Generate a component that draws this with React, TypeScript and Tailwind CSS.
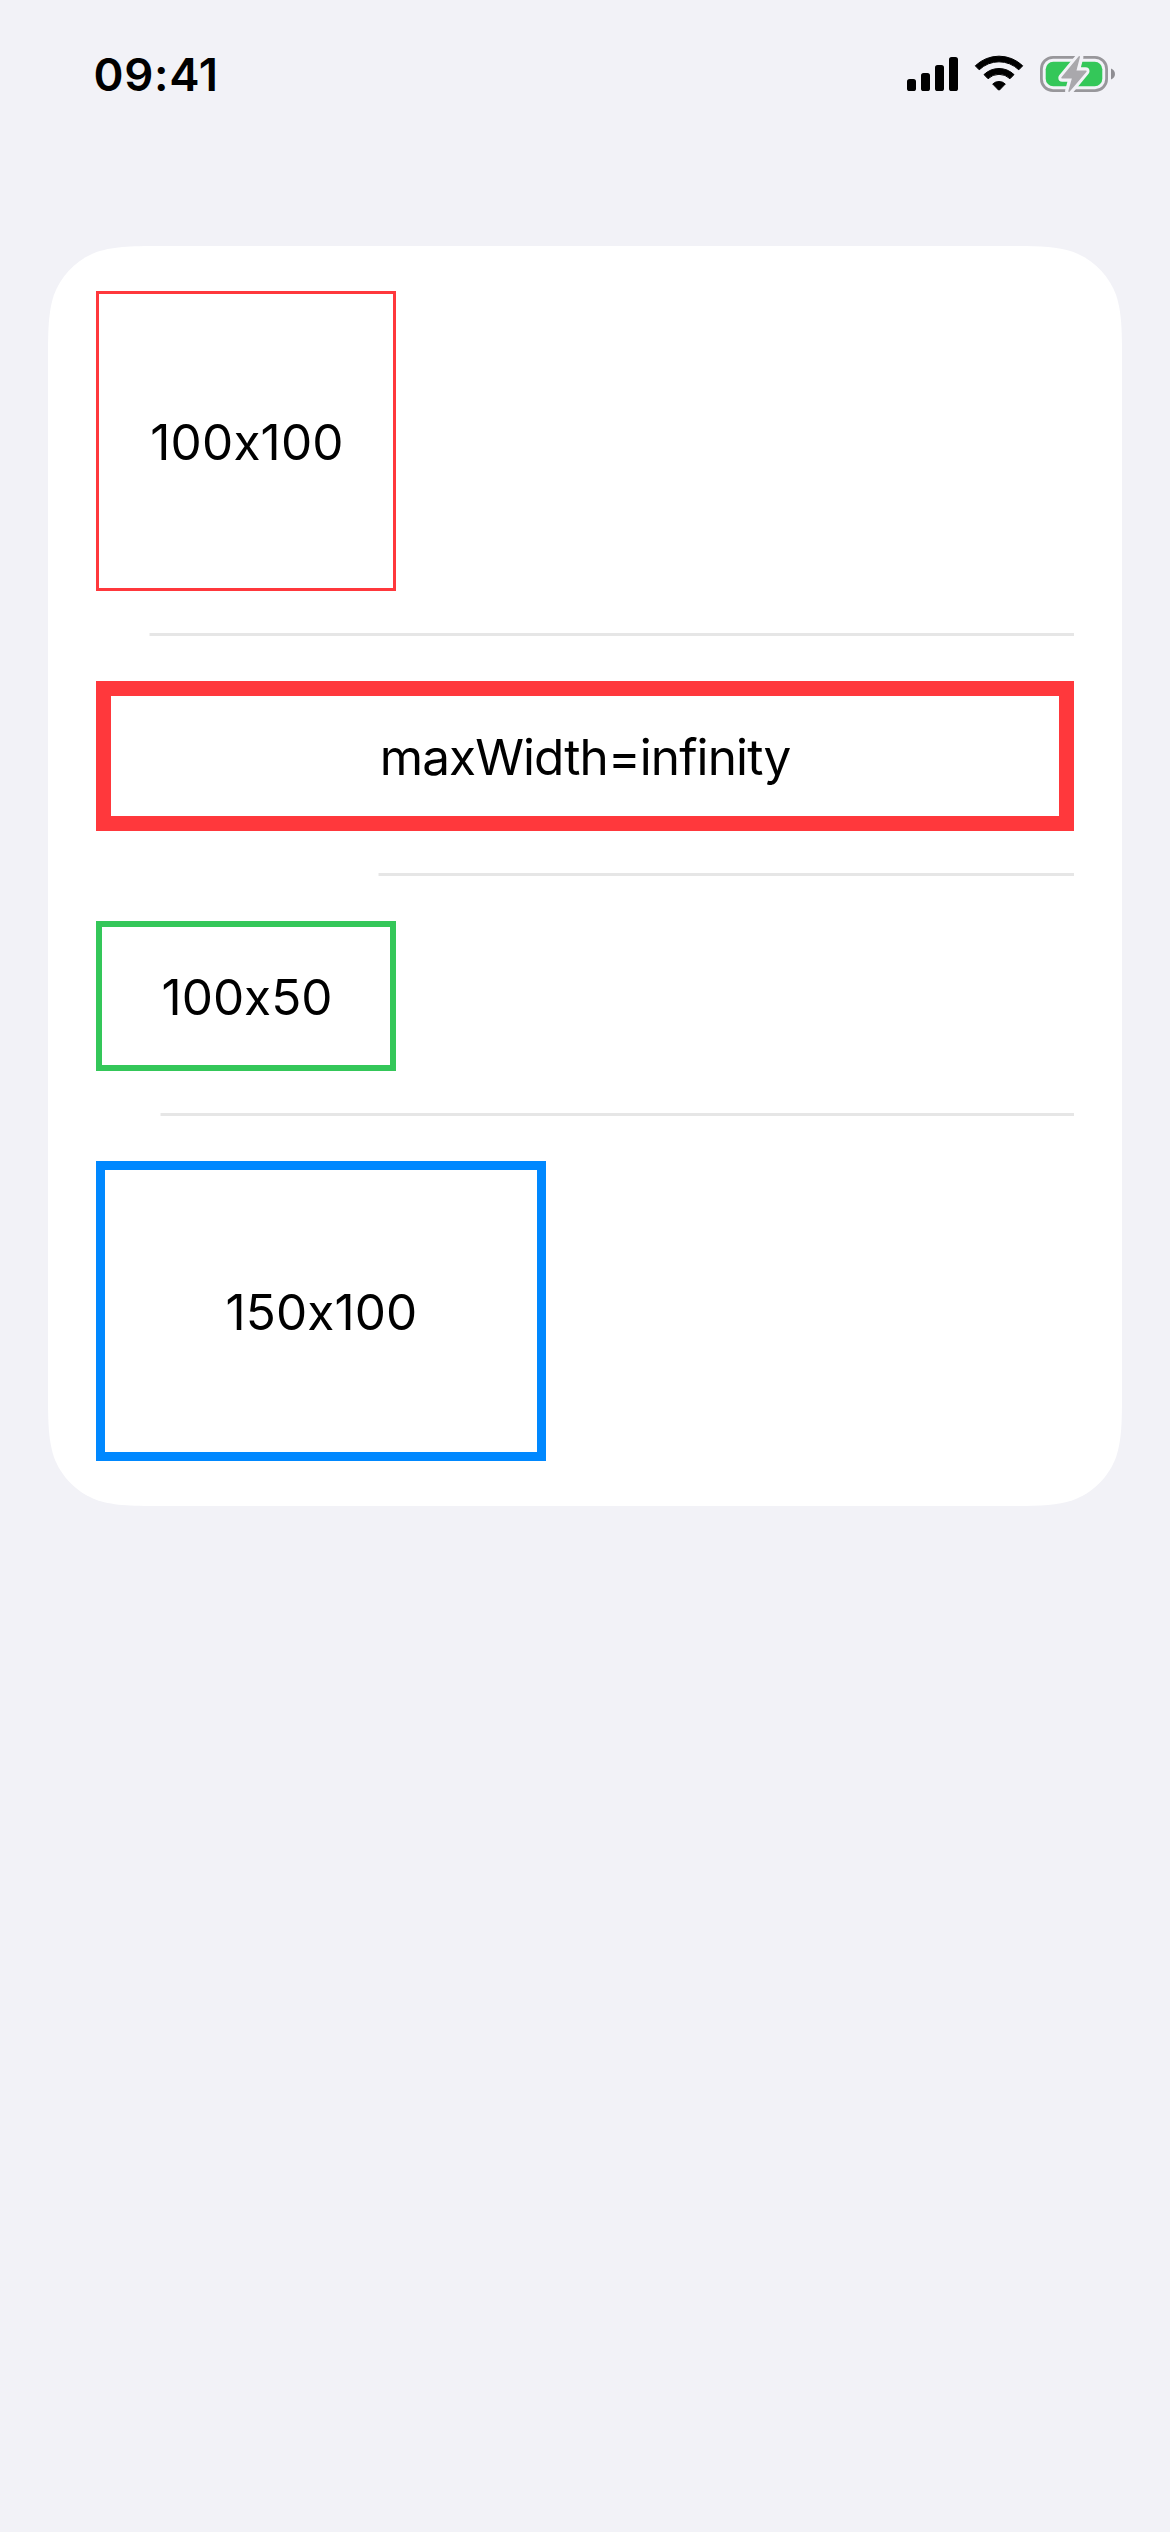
type Row = {
  label: string;
  box: string;
  text: string;
  divider?: string;
};

const rows: Row[] = [
  {
    label: "100x100",
    box: "h-[300px] w-[300px] border-3 border-[#ff383c]",
    text: "pl-[2px] tracking-[0.2px]",
    divider: "ml-[53px]",
  },
  {
    label: "maxWidth=infinity",
    box: "h-[150px] w-full border-15 border-[#ff383c]",
    text: "tracking-[-0.9px]",
    divider: "ml-[282px]",
  },
  {
    label: "100x50",
    box: "h-[150px] w-[300px] border-6 border-[#34c759]",
    text: "pl-[2px]",
    divider: "ml-[64px]",
  },
  {
    label: "150x100",
    box: "h-[300px] w-[450px] border-9 border-[#0088ff]",
    text: "pl-[1px] tracking-[0.1px]",
  },
];

function StatusIcons() {
  return (
    <svg viewBox="900 50 220 48" className="h-[48px] w-[220px]" aria-hidden="true">
      {/* cellular signal */}
      <rect x="907" y="79" width="9" height="12" rx="2.6" />
      <rect x="921" y="73" width="9" height="18" rx="2.6" />
      <rect x="935" y="65" width="9" height="26" rx="2.6" />
      <rect x="949" y="57" width="9" height="34" rx="2.6" />
      {/* wifi */}
      <g transform="translate(999 55)" stroke="#000" strokeWidth="1" strokeLinejoin="round">
        <path d="M-23.7 10.8A34 34 0 0 1 23.7 10.8L19.8 14.8A28.5 28.5 0 0 0 -19.8 14.8Z" />
        <path d="M-15 19.6A21.5 21.5 0 0 1 15 19.6L11 23.7A16 16 0 0 0 -11 23.7Z" />
        <path d="M-6.3 29A9.2 9.2 0 0 1 6.3 29L0.5 35H-0.5Z" />
      </g>
      {/* charging battery */}
      <rect x="1041.4" y="57.4" width="65.2" height="33.2" rx="11.6" fill="none" stroke="#98979b" strokeWidth="2.8" />
      <rect x="1045.7" y="61.7" width="56.6" height="24.6" rx="7.6" fill="#34c759" />
      <path d="M1111 68.5C1116.3 70.3 1116.3 77.7 1111 79.5Z" fill="#8f8e93" />
      <path
        d="M1079.5 57L1075.7 71.3H1085.5L1069 91.3L1072.6 77.7H1062.3Z"
        fill="#f2f2f7"
        stroke="#f2f2f7"
        strokeWidth="8"
        strokeLinejoin="round"
      />
      <path
        d="M1079.3 56.8L1075.6 71.2H1086L1069 91.3L1072.8 77.8H1062Z"
        fill="#a9a8ac"
        stroke="#a9a8ac"
        strokeWidth="1.4"
        strokeLinejoin="round"
      />
    </svg>
  );
}

export default function App() {
  return (
    <div className="flex h-[2532px] w-[1170px] flex-col bg-[#f2f2f7] font-['Inter',sans-serif] text-black">
      <header className="flex h-[148px] items-center justify-between pr-[50px] pl-[93.6px]">
        <span className="pt-[1px] text-[45.5px] leading-[56px] font-semibold tracking-[0.65px]">09:41</span>
        <StatusIcons />
      </header>

      {/* continuous-curvature corners, 78px nominal radius */}
      <main className="mx-12 mt-[98px] h-[1260px] bg-white px-12 [clip-path:path('M119.2,0H954.8C989.1,0,1006.3,0,1024.7,5.8C1044.9,13.2,1060.8,29.1,1068.2,49.3C1074,67.7,1074,84.9,1074,119.2V1140.8C1074,1175.1,1074,1192.3,1068.2,1210.7C1060.8,1230.9,1044.9,1246.8,1024.7,1254.2C1006.3,1260,989.1,1260,954.8,1260H119.2C84.9,1260,67.7,1260,49.3,1254.2C29.1,1246.8,13.2,1230.9,5.8,1210.7C0,1192.3,0,1175.1,0,1140.8V119.2C0,84.9,0,67.7,5.8,49.3C13.2,29.1,29.1,13.2,49.3,5.8C67.7,0,84.9,0,119.2,0Z')]">
        {rows.map((row) => (
          <section key={row.label}>
            <div className="pt-[45px] pb-[42px]">
              <div className={`flex items-center justify-center ${row.box}`}>
                <span
                  className={`pt-[2px] text-[49.5px] leading-[60px] whitespace-nowrap [font-feature-settings:'calt'_0] ${row.text}`}
                >
                  {row.label}
                </span>
              </div>
            </div>
            {row.divider && (
              <div className={`h-[3px] border-l border-[#f3f3f3] bg-[#e6e6e6] ${row.divider}`} />
            )}
          </section>
        ))}
      </main>
    </div>
  );
}
